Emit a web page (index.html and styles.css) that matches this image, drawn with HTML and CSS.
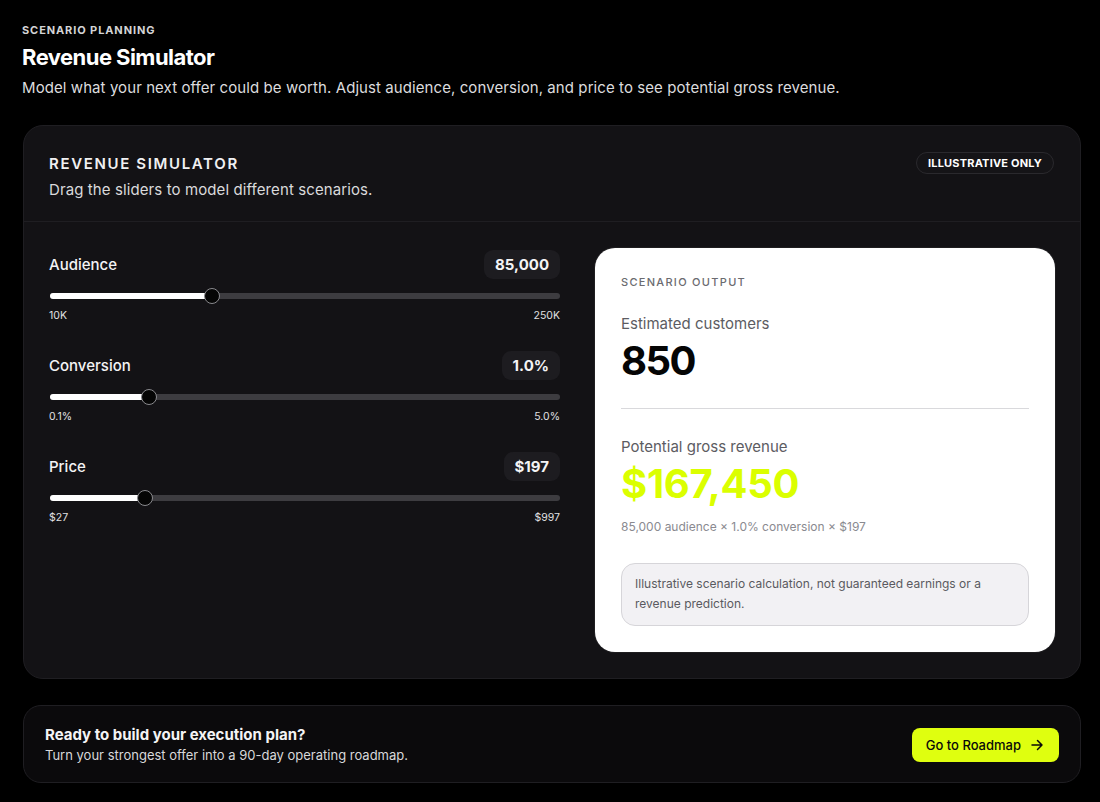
FILE: index.html
```html
<!DOCTYPE html>
<html lang="en">
<head>
<meta charset="utf-8">
<title>Revenue Simulator</title>
<link rel="stylesheet" href="styles.css">
</head>
<body>
<main class="page">
  <header class="intro">
    <div class="eyebrow">SCENARIO PLANNING</div>
    <h1 class="title">Revenue Simulator</h1>
    <p class="lead">Model what your next offer could be worth. Adjust audience, conversion, and price to see potential gross revenue.</p>
  </header>

  <section class="card">
    <div class="card-head">
      <div>
        <h2 class="card-title">REVENUE SIMULATOR</h2>
        <p class="card-sub">Drag the sliders to model different scenarios.</p>
      </div>
      <span class="badge">ILLUSTRATIVE ONLY</span>
    </div>

    <div class="card-body">
      <div class="sliders">
        <div class="slider">
          <div class="slider-top">
            <span class="slider-label">Audience</span>
            <span class="slider-value">85,000</span>
          </div>
          <div class="track">
            <div class="fill" style="width: calc(0.3125 * (100% - 16px) + 8px)"></div>
            <div class="thumb" style="left: calc(0.3125 * (100% - 16px))"></div>
          </div>
          <div class="range"><span>10K</span><span>250K</span></div>
        </div>

        <div class="slider">
          <div class="slider-top">
            <span class="slider-label">Conversion</span>
            <span class="slider-value">1.0%</span>
          </div>
          <div class="track">
            <div class="fill" style="width: calc(0.1837 * (100% - 16px) + 8px)"></div>
            <div class="thumb" style="left: calc(0.1837 * (100% - 16px))"></div>
          </div>
          <div class="range"><span>0.1%</span><span>5.0%</span></div>
        </div>

        <div class="slider">
          <div class="slider-top">
            <span class="slider-label">Price</span>
            <span class="slider-value">$197</span>
          </div>
          <div class="track">
            <div class="fill" style="width: calc(0.1753 * (100% - 16px) + 8px)"></div>
            <div class="thumb" style="left: calc(0.1753 * (100% - 16px))"></div>
          </div>
          <div class="range"><span>$27</span><span>$997</span></div>
        </div>
      </div>

      <div class="output">
        <div class="out-eyebrow">SCENARIO OUTPUT</div>
        <div class="out-label first">Estimated customers</div>
        <div class="out-big tight">850</div>
        <hr class="out-rule">
        <div class="out-label">Potential gross revenue</div>
        <div class="out-big accent">$167,450</div>
        <div class="out-formula">85,000 audience × 1.0% conversion × $197</div>
        <div class="disclaimer">Illustrative scenario calculation, not guaranteed earnings or a revenue prediction.</div>
      </div>
    </div>
  </section>

  <section class="cta">
    <div>
      <div class="cta-title">Ready to build your execution plan?</div>
      <div class="cta-sub">Turn your strongest offer into a 90-day operating roadmap.</div>
    </div>
    <a class="cta-btn" href="#">Go to Roadmap
      <svg width="14" height="14" viewBox="0 0 14 14" fill="none" stroke="currentColor" stroke-width="1.5" stroke-linecap="round" stroke-linejoin="round"><path d="M2 7h10M7.5 2.5L12 7l-4.5 4.5"/></svg>
    </a>
  </section>
</main>
</body>
</html>
```

FILE: styles.css
```css
* { box-sizing: border-box; }
html, body { margin: 0; padding: 0; background: #000; }
body {
  font-family: Inter, "Noto Sans", "Liberation Sans", sans-serif;
  color: #f4f4f5;
}
.page { padding: 23px 19px 0 22px; }

.intro { margin-bottom: 27px; }
.eyebrow {
  font-size: 11px; line-height: 14px; font-weight: 700;
  letter-spacing: 0.9px; color: #d4d4d6;
}
.title {
  margin: 6px 0 0; font-size: 22px; line-height: 28px; font-weight: 700;
  color: #fff; letter-spacing: -0.55px;
}
.lead {
  margin: 7px 0 0; font-size: 15px; line-height: 20px; color: #dcdcde;
  letter-spacing: 0.08px;
}

.card {
  margin-left: 1px;
  background: #131215;
  border: 1px solid #1f1e22;
  border-radius: 20px;
}
.card-head {
  display: flex; justify-content: space-between; align-items: flex-start;
  padding: 28px 26px 21px 25px;
  border-bottom: 1px solid #1f1e22;
}
.card-title {
  margin: 0; font-size: 15px; line-height: 20px; font-weight: 600;
  letter-spacing: 1.65px; color: #f0f0f2;
}
.card-sub {
  margin: 6px 0 0; font-size: 15px; line-height: 20px; color: #dadadc;
  letter-spacing: 0.1px;
}
.badge {
  margin-top: -2px;
  font-size: 11px; line-height: 14px; font-weight: 700; letter-spacing: 0.2px;
  color: #fff; background: #151417;
  border: 1px solid #2a292d; border-radius: 999px;
  padding: 3px 11px;
}

.card-body {
  display: grid; grid-template-columns: 1fr 460px; column-gap: 35px;
  padding: 26px 25px 26px 25px;
}
.sliders { display: flex; flex-direction: column; gap: 28px; padding-top: 2px; }
.slider-top {
  display: flex; justify-content: space-between; align-items: center;
  height: 29px;
}
.slider-label { font-size: 15px; font-weight: 500; color: #f4f4f5; }
.slider-value {
  height: 29px; line-height: 29px; padding: 0 11px;
  background: #1d1c20; border-radius: 9px;
  font-size: 15px; font-weight: 700; color: #f4f4f5;
}
.track {
  position: relative; margin-top: 14px; height: 6px;
  background: #3d3c40; border-radius: 3px; margin-left: 1px;
}
.fill {
  position: absolute; left: 0; top: 0; bottom: 0;
  background: #fff; border-radius: 3px;
}
.thumb {
  position: absolute; top: -5px; width: 16px; height: 16px;
  border-radius: 50%; background: #050505; border: 1.5px solid #8a8a8e;
}
.range {
  display: flex; justify-content: space-between;
  margin-top: 10px; font-size: 10.5px; line-height: 14px; color: #e0e0e2;
}

.output {
  background: #fff; border-radius: 20px;
  padding: 27px 26px 26px 26px;
  color: #111;
  box-shadow: 0 0 0 1px rgba(255,255,255,0.05);
}
.out-eyebrow {
  font-size: 11px; line-height: 14px; letter-spacing: 1.3px;
  color: #6b6b70; font-weight: 500;
}
.out-label {
  margin-top: 28px; font-size: 15px; line-height: 20px; color: #5c5c62;
}
.out-label.first { margin-top: 25px; }
.out-big {
  margin-top: 5px; font-size: 40px; line-height: 44px; font-weight: 700;
  color: #050505; letter-spacing: -0.6px;
}
.out-big.tight { letter-spacing: -1.6px; }
.out-big.accent { color: #dbff00; margin-top: 5px; letter-spacing: -0.3px; }
.out-rule { margin: 25px 0 0; border: 0; border-top: 1px solid #d9d9dc; }
.out-formula {
  margin-top: 13px; font-size: 12px; line-height: 16px; color: #8a8a90;
}
.disclaimer {
  margin-top: 28px;
  background: #f2f1f4; border: 1px solid #d6d5d9; border-radius: 14px;
  padding: 10px 13px 11px;
  font-size: 12px; line-height: 20px; color: #5a5a60;
}

.cta {
  margin: 26px 0 0 1px;
  display: flex; justify-content: space-between; align-items: center;
  background: #0b0a0c; border: 1px solid #1f1e22; border-radius: 18px;
  padding: 19px 21px 18px 21px;
}
.cta-title { font-size: 15px; line-height: 20px; font-weight: 700; color: #f4f4f5; }
.cta-sub { margin-top: 1px; font-size: 13px; line-height: 18px; color: #d8d8da; }
.cta-btn {
  display: inline-flex; align-items: center; gap: 9px;
  height: 34px; padding: 0 15px 0 14px;
  background: #dfff0f; color: #0a0a0a; border-radius: 8px;
  font-size: 13px; font-weight: 500; text-decoration: none;
}
```
